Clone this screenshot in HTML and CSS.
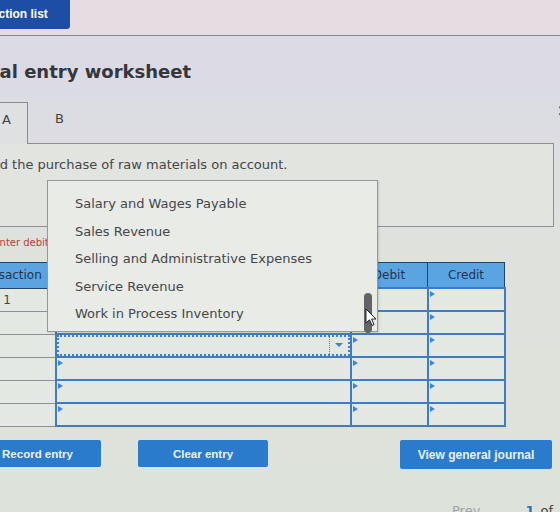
FILE: index.html
```html
<!DOCTYPE html>
<html lang="en">
<head>
    <meta charset="UTF-8">
    <meta name="viewport" content="width=device-width, initial-scale=1.0">
    <title>Journal entry worksheet</title>
    <link rel="stylesheet" href="styles.css">
</head>
<body>
    <div class="topbar">
        <a class="list-btn" href="#">View transaction list</a>
    </div>

    <div class="worksheet">
        <h1 class="title">Journal entry worksheet</h1>

        <div class="tabs">
            <div class="tab active">A</div>
            <div class="tab">B</div>
            <span class="next">&rsaquo;</span>
        </div>

        <div class="panel">
            <p class="task">Record the purchase of raw materials on account.</p>
        </div>

        <p class="note">Note: Enter debits before credits.</p>

        <table class="journal">
            <colgroup>
                <col class="c-num">
                <col class="c-acct">
                <col class="c-amt">
                <col class="c-amt">
            </colgroup>
            <thead>
                <tr>
                    <th>Transaction</th>
                    <th>Account Title</th>
                    <th>Debit</th>
                    <th>Credit</th>
                </tr>
            </thead>
            <tbody>
                <tr>
                    <td class="num">1</td>
                    <td class="acct"></td>
                    <td class="amt"></td>
                    <td class="amt"></td>
                </tr>
                <tr>
                    <td class="num"></td>
                    <td class="acct"></td>
                    <td class="amt"></td>
                    <td class="amt"></td>
                </tr>
                <tr>
                    <td class="num"></td>
                    <td class="acct focus">
                        <div class="select"><span class="caret"></span></div>
                    </td>
                    <td class="amt"></td>
                    <td class="amt"></td>
                </tr>
                <tr>
                    <td class="num"></td>
                    <td class="acct"></td>
                    <td class="amt"></td>
                    <td class="amt"></td>
                </tr>
                <tr>
                    <td class="num"></td>
                    <td class="acct"></td>
                    <td class="amt"></td>
                    <td class="amt"></td>
                </tr>
                <tr>
                    <td class="num"></td>
                    <td class="acct"></td>
                    <td class="amt"></td>
                    <td class="amt"></td>
                </tr>
            </tbody>
        </table>

        <!-- open account dropdown, drawn over the table -->
        <ul class="picker">
            <li>Salary and Wages Payable</li>
            <li>Sales Revenue</li>
            <li>Selling and Administrative Expenses</li>
            <li>Service Revenue</li>
            <li>Work in Process Inventory</li>
            <span class="thumb"></span>
        </ul>

        <svg class="cursor" width="12" height="19" viewBox="0 0 12 19">
            <path d="M1 1 L1 15 L4.5 11.8 L7 17.5 L9 16.6 L6.6 11 L11 11 Z" fill="#fff" stroke="#222" stroke-width="1"/>
        </svg>

        <div class="actions">
            <button class="btn record">Record entry</button>
            <button class="btn clear">Clear entry</button>
            <button class="btn journal-btn">View general journal</button>
        </div>

        <div class="pager">
            <span class="prev">Prev</span>
            <span class="page-no">1</span>
            <span class="of">of</span>
        </div>
    </div>
</body>
</html>
```

FILE: styles.css
```css
body {
    margin: 0;
    overflow: hidden;
    font-family: "DejaVu Sans", Verdana, sans-serif;
    color: #3b3d42;
    background: linear-gradient(#dbd9e6 0, #dcdce3 120px, #dfe2dc 260px, #dde2da 512px);
}
.topbar {
    display: flex;
    height: 35px;
    background-color: #e6dde3;
    border-bottom: 1px solid #8b8899;
}
.list-btn {
    display: block;
    margin-left: -90px;
    height: 29px;
    padding: 0 22px;
    background-color: #1d4ea5;
    color: #fff;
    font: bold 12px "Liberation Sans", Arial, sans-serif;
    line-height: 29px;
    text-decoration: none;
    border-radius: 0 0 3px 0;
}
.worksheet {
    position: relative;
    padding-top: 24px;
}
.title {
    margin: 0 0 0 -54px;
    font-size: 18px;
    line-height: 24px;
    font-weight: bold;
    color: #35363c;
}
.tabs {
    display: flex;
    height: 41px;
    margin-top: 18px;
}
.tab {
    padding: 9px 0 0 2px;
    font-size: 13px;
    line-height: 16px;
    color: #444;
}
.tab.active {
    margin-left: -10px;
    width: 38px;
    padding-left: 12px;
    box-sizing: border-box;
    border: 1px solid #8b8b98;
    border-left: none;
    border-bottom: none;
    background-color: #dfe0e2;
    position: relative;
    z-index: 1;
    height: 42px;
}
.tab + .tab {
    margin-left: 25px;
}
.next {
    margin-left: auto;
    margin-right: -6px;
    font-size: 22px;
    line-height: 16px;
    color: #333;
}
.panel {
    margin-left: -10px;
    width: 562px;
    height: 82px;
    border: 1px solid #8f8f9a;
    background-color: #e2e4df;
}
.task {
    margin: 12px 0 0 -28px;
    font-size: 13px;
    line-height: 18px;
    color: #45464b;
}
.note {
    margin: 9px 0 0 -37px;
    font-size: 10px;
    line-height: 14px;
    color: #b5413f;
}
.journal {
    margin: 12px 0 0 -41px;
    border-collapse: collapse;
    table-layout: fixed;
    width: 544px;
}
.c-num {
    width: 96px;
}
.c-acct {
    width: 295px;
}
.c-amt {
    width: 77px;
}
.journal th {
    height: 24px;
    padding: 0;
    background-color: #5aa4e2;
    color: #1f3553;
    font-size: 12px;
    font-weight: normal;
    border: 1px solid #23446c;
}
.journal td {
    height: 21px;
    padding: 0;
    background-color: #e4e8e2;
}
.journal td.num {
    border-right: 1px solid #8d9194;
    border-bottom: 1px solid #8d9194;
    text-align: center;
    font-size: 12px;
    color: #444;
}
.journal td.acct,
.journal td.amt {
    position: relative;
    border: 2px solid #3e7cc4;
}
.journal td.acct::before,
.journal td.amt::before {
    content: "";
    position: absolute;
    left: 1px;
    top: 2px;
    border-left: 5px solid #3f84d6;
    border-top: 3px solid transparent;
    border-bottom: 3px solid transparent;
}
.journal td.focus::before {
    display: none;
}
.select {
    display: flex;
    justify-content: flex-end;
    height: 21px;
    border: 2px dotted #3f7fd0;
    box-sizing: border-box;
}
.caret {
    width: 18px;
    border-left: 1px dotted #3f7fd0;
    position: relative;
}
.caret::after {
    content: "";
    position: absolute;
    left: 5px;
    top: 6px;
    border-top: 4px solid #3f7fd0;
    border-left: 4px solid transparent;
    border-right: 4px solid transparent;
}
.picker {
    position: absolute;
    left: 47px;
    top: 144px;
    width: 331px;
    height: 152px;
    margin: 0;
    padding: 9px 0 0 27px;
    box-sizing: border-box;
    list-style: none;
    background-color: #e9ebe6;
    border: 1px solid #9597a2;
    box-shadow: 1px 1px 2px rgba(0, 0, 0, 0.12);
}
.picker li {
    font-size: 13px;
    line-height: 27.5px;
    color: #45474b;
}
.thumb {
    position: absolute;
    right: 5px;
    top: 112px;
    width: 8px;
    height: 40px;
    border-radius: 4px;
    background-color: #626468;
}
.cursor {
    position: absolute;
    left: 365px;
    top: 272px;
}
.actions {
    display: flex;
    margin-top: 13px;
}
.btn {
    height: 27px;
    padding: 0;
    border: none;
    border-radius: 2px;
    background-color: #2b7bcc;
    color: #e9f1f8;
    font: bold 11.5px "Liberation Sans", Arial, sans-serif;
    cursor: pointer;
}
.record {
    margin-left: -26px;
    width: 127px;
}
.clear {
    margin-left: 37px;
    width: 130px;
}
.journal-btn {
    margin-left: auto;
    margin-right: 8px;
    width: 152px;
    height: 29px;
    font-size: 12px;
}
.pager {
    display: flex;
    margin-top: 34px;
    padding-left: 452px;
    font-size: 13px;
    line-height: 16px;
}
.prev {
    color: #9ea3a6;
}
.page-no {
    margin-left: 45px;
    font-weight: bold;
    color: #2b6fc0;
}
.of {
    margin-left: 6px;
    color: #444;
}
```
